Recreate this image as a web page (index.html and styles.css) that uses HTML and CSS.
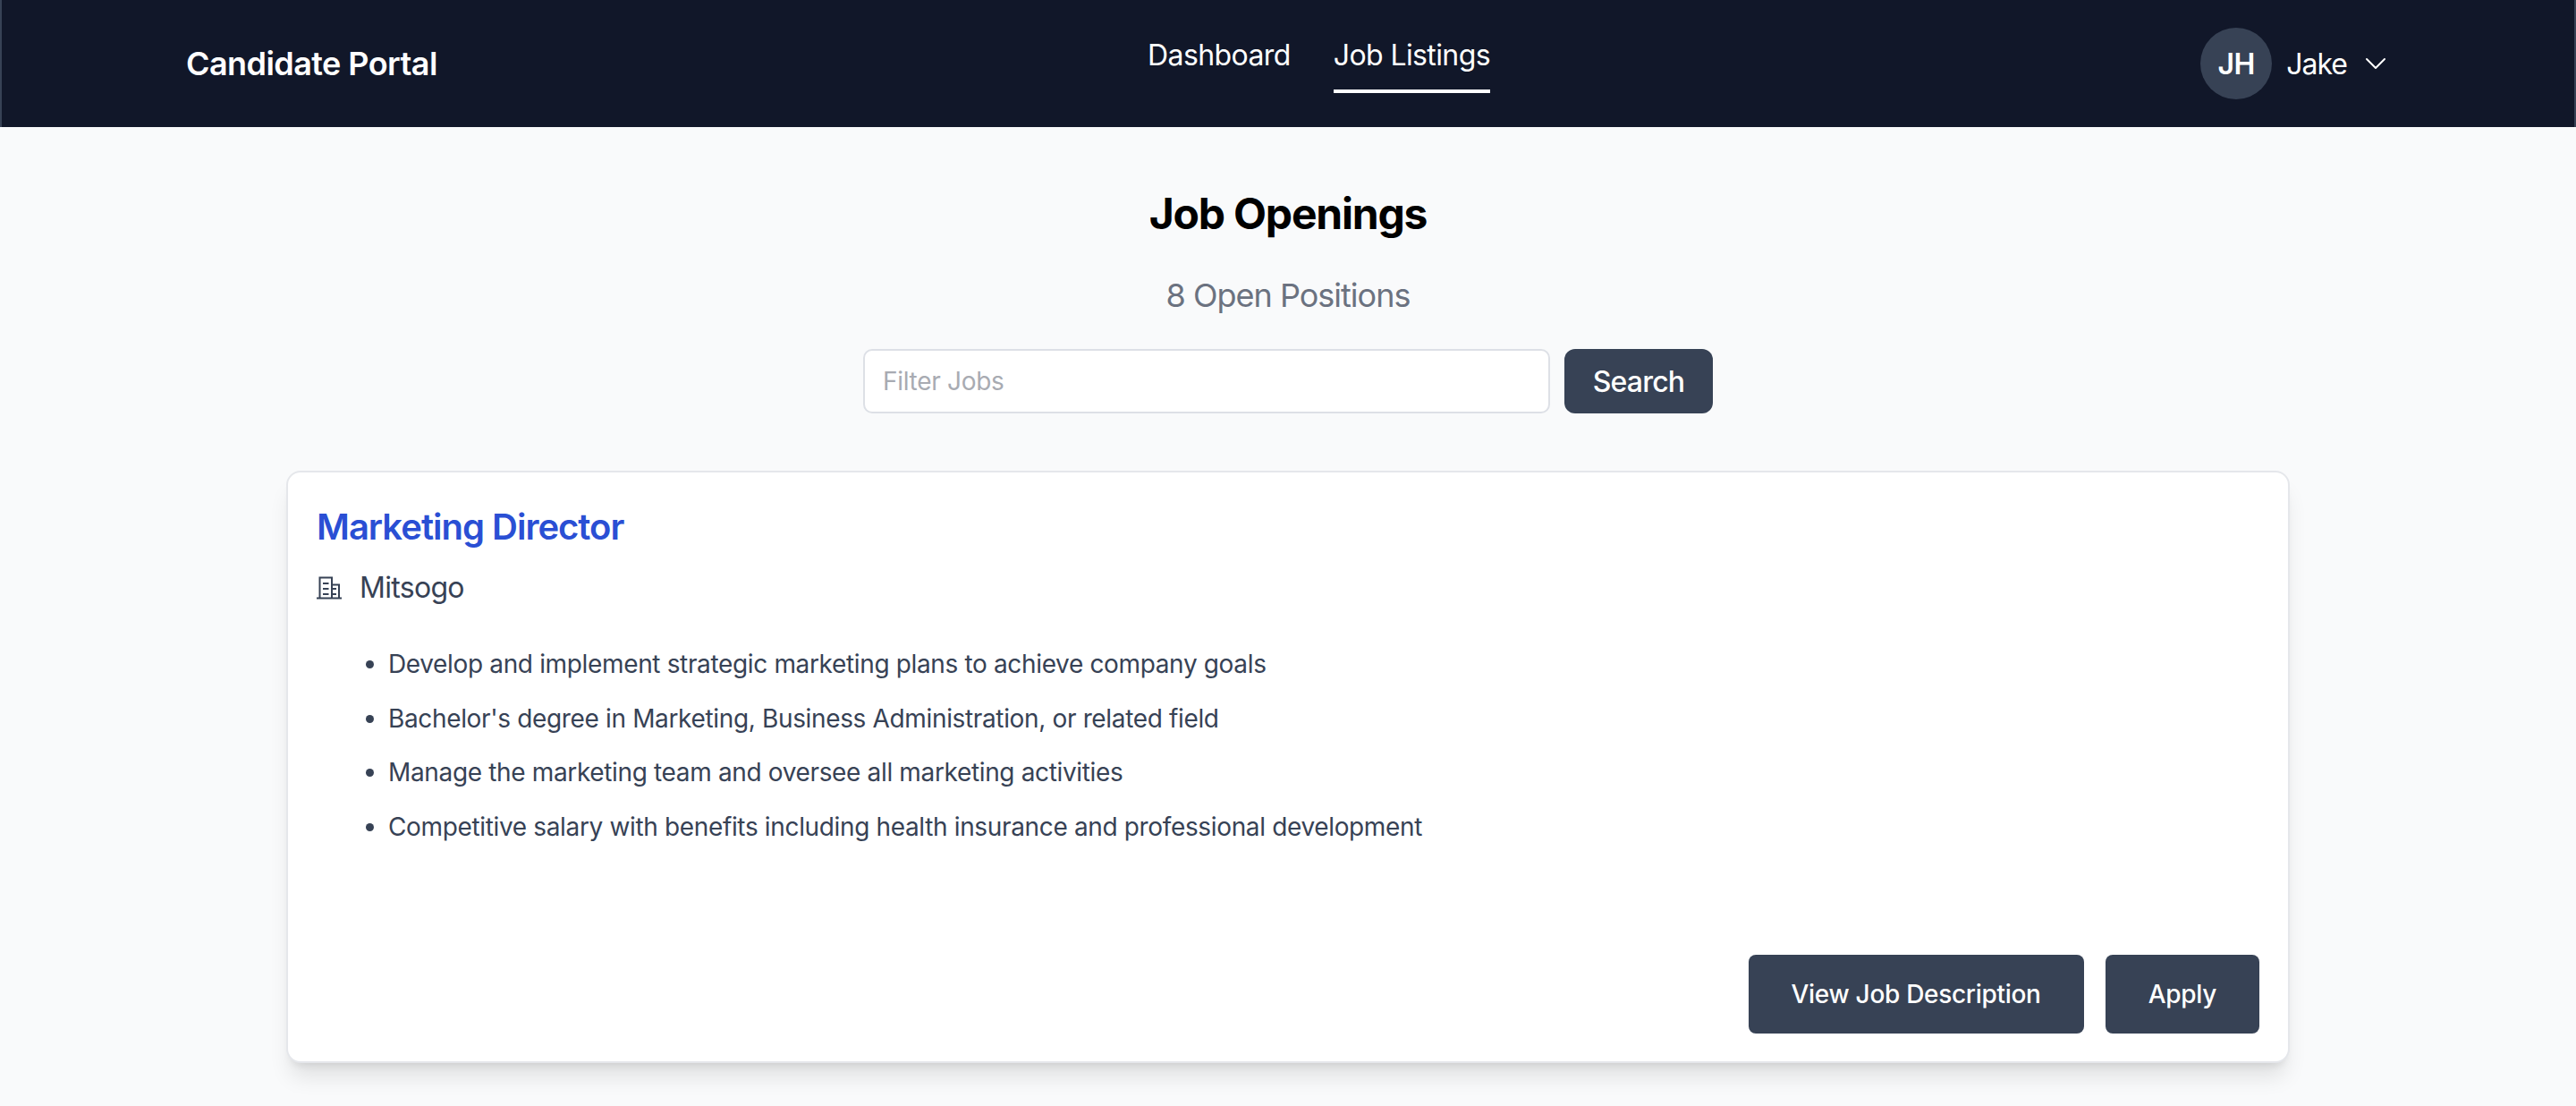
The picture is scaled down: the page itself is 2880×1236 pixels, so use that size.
FILE: index.html
```html
<!DOCTYPE html>
<html lang="en">
<head>
  <meta charset="UTF-8">
  <meta name="viewport" content="width=device-width, initial-scale=1.0">
  <title>Job Openings</title>
  <link rel="stylesheet" href="styles.css">
</head>
<body>
  <header class="topbar">
    <div class="brand">Candidate Portal</div>
    <nav class="nav">
      <a class="nav-link">Dashboard</a>
      <a class="nav-link active">Job Listings</a>
    </nav>
    <div class="user">
      <span class="avatar">JH</span>
      <span class="user-name">Jake</span>
      <svg class="chevron" viewBox="0 0 24 24" fill="none" stroke="currentColor" stroke-width="1.5" stroke-linecap="round" stroke-linejoin="round"><path d="M19.5 8.25l-7.5 7.5-7.5-7.5"/></svg>
    </div>
  </header>

  <main class="content">
    <h1 class="title">Job Openings</h1>
    <p class="count">8 Open Positions</p>
    <div class="search">
      <input class="search-input" type="text" placeholder="Filter Jobs">
      <button class="btn search-btn">Search</button>
    </div>

    <section class="card">
      <h2 class="job-title">Marketing Director</h2>
      <div class="company">
        <svg class="company-icon" viewBox="0 0 28 26" fill="none" stroke="currentColor" stroke-width="2"><path d="M0 24.5h28M3.5 24.5V1.5h13.5v23M17 9.5h8v15M7 8h6.5M7 14h6.5M7 20h6.5M17 14H22M17 20H22"/></svg>
        <span>Mitsogo</span>
      </div>
      <ul class="points">
        <li>Develop and implement strategic marketing plans to achieve company goals</li>
        <li>Bachelor's degree in Marketing, Business Administration, or related field</li>
        <li>Manage the marketing team and oversee all marketing activities</li>
        <li>Competitive salary with benefits including health insurance and professional development</li>
      </ul>
      <div class="actions">
        <button class="btn action-btn">View Job Description</button>
        <button class="btn action-btn">Apply</button>
      </div>
    </section>
  </main>
</body>
</html>
```

FILE: styles.css
```css
* {
  box-sizing: border-box;
}

body {
  margin: 0;
  height: 1236px;
  overflow: hidden;
  font-family: Inter, "Liberation Sans", sans-serif;
  background: #f9fafb;
  color: #374255;
}

.topbar {
  height: 142px;
  padding: 0 206px;
  display: flex;
  align-items: center;
  justify-content: space-between;
  background: #111729;
  border-left: 2px solid #374255;
  border-right: 2px solid #374255;
  color: #fff;
}

.brand {
  font-size: 36px;
  font-weight: 600;
  letter-spacing: -0.56px;
}

.nav {
  display: flex;
  gap: 48px;
}

.nav-link {
  padding: 4px 0 18px;
  font-size: 32px;
  line-height: 40px;
  letter-spacing: -0.6px;
  border-bottom: 4px solid transparent;
}

.nav-link.active {
  border-bottom-color: #fff;
}

.user {
  display: flex;
  align-items: center;
  font-size: 32px;
  letter-spacing: -0.5px;
}

.user-name {
  letter-spacing: -1px;
}

.avatar {
  width: 80px;
  height: 80px;
  margin-right: 16px;
  display: flex;
  align-items: center;
  justify-content: center;
  border-radius: 50%;
  background: #374255;
  font-weight: 600;
}

.chevron {
  width: 32px;
  height: 32px;
  margin-left: 16px;
}

.content {
  display: flex;
  flex-direction: column;
  align-items: center;
}

.title {
  margin: 73px 0 0;
  font-size: 48px;
  line-height: 48px;
  font-weight: 700;
  letter-spacing: -1.2px;
  color: #000;
}

.count {
  margin: 47px 0 0;
  font-size: 36px;
  line-height: 40px;
  letter-spacing: -1px;
  color: #6b7280;
}

.search {
  margin-top: 40px;
  display: flex;
  gap: 16px;
}

.search-input {
  width: 768px;
  height: 72px;
  padding: 0 20px;
  font: inherit;
  font-size: 28px;
  letter-spacing: -0.3px;
  background: #fff;
  border: 2px solid #dde0e6;
  border-radius: 10px;
}

.search-input::placeholder {
  color: #a8abb2;
}

.btn {
  font-family: inherit;
  color: #fff;
  background: #374255;
  border: 0;
  border-radius: 8px;
}

.search-btn {
  width: 166px;
  height: 72px;
  font-size: 32px;
  font-weight: 500;
  letter-spacing: -0.8px;
  border-radius: 12px;
}

.card {
  width: 2240px;
  height: 662px;
  margin-top: 64px;
  padding: 37px 32px 31px;
  display: flex;
  flex-direction: column;
  background: #fff;
  border: 2px solid #e5e7eb;
  border-radius: 16px;
  box-shadow: 0 20px 25px -5px rgba(0, 0, 0, 0.1), 0 8px 10px -6px rgba(0, 0, 0, 0.1);
}

.job-title {
  margin: 0;
  font-size: 40px;
  line-height: 48px;
  font-weight: 600;
  letter-spacing: -1px;
  color: #2a4fd4;
}

.company {
  margin-top: 22px;
  display: flex;
  align-items: center;
  gap: 20px;
  font-size: 32px;
  line-height: 44px;
  letter-spacing: -0.7px;
}

.company-icon {
  width: 28px;
  height: 26px;
}

.points {
  margin: 43px 0 0;
  padding-left: 80px;
  font-size: 28px;
  line-height: 40px;
  letter-spacing: -0.35px;
}

.points li {
  margin-bottom: 20.6px;
}

.actions {
  margin-top: auto;
  display: flex;
  justify-content: flex-end;
  gap: 24px;
}

.action-btn {
  height: 88px;
  padding: 0 48px;
  font-size: 28px;
  font-weight: 500;
  letter-spacing: -0.3px;
}
```
